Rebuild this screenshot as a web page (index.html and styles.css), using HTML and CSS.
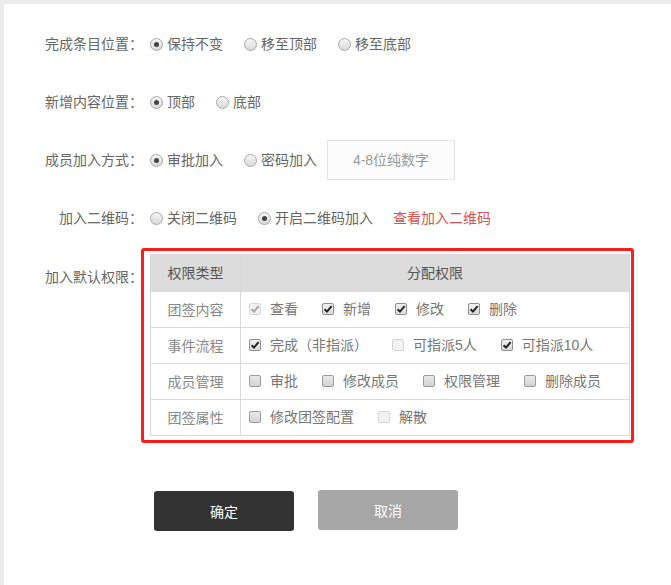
FILE: index.html
```html
<!DOCTYPE html>
<html lang="zh-CN">
<head>
<meta charset="utf-8">
<title>设置</title>
<link rel="stylesheet" href="styles.css">
</head>
<body>
<div class="page">
  <form class="form">
    <div class="row">
      <span class="label">完成条目位置：</span>
      <div class="options">
        <span class="opt"><i class="radio on"></i>保持不变</span>
        <span class="opt"><i class="radio"></i>移至顶部</span>
        <span class="opt"><i class="radio"></i>移至底部</span>
      </div>
    </div>
    <div class="row">
      <span class="label">新增内容位置：</span>
      <div class="options">
        <span class="opt"><i class="radio on"></i>顶部</span>
        <span class="opt"><i class="radio"></i>底部</span>
      </div>
    </div>
    <div class="row">
      <span class="label">成员加入方式：</span>
      <div class="options">
        <span class="opt"><i class="radio on"></i>审批加入</span>
        <span class="opt"><i class="radio"></i>密码加入</span>
        <input class="pwd" type="text" placeholder="4-8位纯数字">
      </div>
    </div>
    <div class="row">
      <span class="label">加入二维码：</span>
      <div class="options">
        <span class="opt"><i class="radio"></i>关闭二维码</span>
        <span class="opt"><i class="radio on"></i>开启二维码加入</span>
        <a class="link" href="#">查看加入二维码</a>
      </div>
    </div>
    <div class="row row-perm">
      <span class="label">加入默认权限：</span>
      <div class="perm">
        <table class="perm-table">
          <thead>
            <tr><th class="c1">权限类型</th><th>分配权限</th></tr>
          </thead>
          <tbody>
            <tr>
              <td class="cat">团签内容</td>
              <td><div class="items">
                <span class="chk"><i class="box dis"><svg viewBox="0 0 10 10"><path d="M1.6 5.2 L4 7.6 L8.6 2.2" /></svg></i>查看</span>
                <span class="chk"><i class="box on"><svg viewBox="0 0 10 10"><path d="M1.6 5.2 L4 7.6 L8.6 2.2" /></svg></i>新增</span>
                <span class="chk"><i class="box on"><svg viewBox="0 0 10 10"><path d="M1.6 5.2 L4 7.6 L8.6 2.2" /></svg></i>修改</span>
                <span class="chk"><i class="box on"><svg viewBox="0 0 10 10"><path d="M1.6 5.2 L4 7.6 L8.6 2.2" /></svg></i>删除</span>
              </div></td>
            </tr>
            <tr>
              <td class="cat">事件流程</td>
              <td><div class="items">
                <span class="chk"><i class="box on"><svg viewBox="0 0 10 10"><path d="M1.6 5.2 L4 7.6 L8.6 2.2" /></svg></i>完成（非指派）</span>
                <span class="chk"><i class="box dis"></i>可指派5人</span>
                <span class="chk"><i class="box on"><svg viewBox="0 0 10 10"><path d="M1.6 5.2 L4 7.6 L8.6 2.2" /></svg></i>可指派10人</span>
              </div></td>
            </tr>
            <tr>
              <td class="cat">成员管理</td>
              <td><div class="items">
                <span class="chk"><i class="box"></i>审批</span>
                <span class="chk"><i class="box"></i>修改成员</span>
                <span class="chk"><i class="box"></i>权限管理</span>
                <span class="chk"><i class="box"></i>删除成员</span>
              </div></td>
            </tr>
            <tr>
              <td class="cat">团签属性</td>
              <td><div class="items">
                <span class="chk"><i class="box"></i>修改团签配置</span>
                <span class="chk"><i class="box dis"></i>解散</span>
              </div></td>
            </tr>
          </tbody>
        </table>
        <div class="highlight"></div>
      </div>
    </div>
    <div class="actions">
      <button class="btn btn-ok" type="button">确定</button>
      <button class="btn btn-cancel" type="button">取消</button>
    </div>
  </form>
</div>
</body>
</html>
```

FILE: styles.css
```css
* { box-sizing: border-box; }

body {
  margin: 0;
  background: #ebebeb;
  font-family: "Liberation Sans", "Noto Sans CJK SC", sans-serif;
  font-size: 14px;
  color: #666;
}

.page {
  margin: 4px 0 0 4px;
  background: #fff;
  height: 581px;
  padding-top: 20px;
}

.form {
  display: flex;
  flex-direction: column;
}

.row {
  display: flex;
  align-items: center;
  height: 40px;
}

.row + .row { margin-top: 18px; }

.label {
  width: 139px;
  margin-right: 7px;
  text-align: right;
  line-height: 20px;
  white-space: nowrap;
  color: #666;
}

.options {
  display: flex;
  align-items: center;
}

.opt {
  display: flex;
  align-items: center;
  line-height: 20px;
  white-space: nowrap;
}

.opt + .opt { margin-left: 21px; }

.radio {
  position: relative;
  display: inline-block;
  width: 13px;
  height: 13px;
  margin-right: 4px;
  border: 1px solid #a8a8a8;
  border-radius: 50%;
  background: linear-gradient(#f6f6f6, #d9d9d9);
}

.radio.on::after {
  content: "";
  position: absolute;
  left: 3px;
  top: 3px;
  width: 5px;
  height: 5px;
  border-radius: 50%;
  background: #444;
}

.pwd {
  width: 128px;
  height: 40px;
  margin-left: 10px;
  border: 1px solid #e3e3e3;
  background: #fcfcfc;
  text-align: center;
  font-family: "Liberation Sans", "Noto Sans CJK SC", sans-serif;
  font-size: 14px;
  color: #666;
  outline: none;
}

.pwd::placeholder { color: #9a9a9a; }

.link {
  margin-left: 20px;
  line-height: 20px;
  color: #d9534f;
  text-decoration: none;
}

.row.row-perm {
  height: auto;
  align-items: flex-start;
  margin-top: 16px;
}

.row-perm .label { padding-top: 13px; }

.perm { position: relative; }

.perm-table {
  width: 480px;
  border-collapse: collapse;
  table-layout: fixed;
}

.perm-table th {
  height: 37px;
  padding: 0;
  background: #dcdcdc;
  font-weight: normal;
  color: #555;
  text-align: center;
  border-left: 1px solid #d6d6d6;
  border-right: 1px solid #d6d6d6;
}

.perm-table th.c1 { width: 90px; }

.perm-table td {
  height: 36px;
  padding: 0 0 0 8px;
  border: 1px solid #dadada;
  color: #777;
  vertical-align: middle;
}

.perm-table td.cat {
  padding: 0;
  text-align: center;
  color: #888;
}

.items {
  display: flex;
  align-items: center;
  height: 34px;
}

.chk {
  display: inline-flex;
  align-items: center;
  line-height: 20px;
  white-space: nowrap;
}

.chk + .chk { margin-left: 24px; }

.box {
  display: inline-flex;
  align-items: center;
  justify-content: center;
  width: 12px;
  height: 12px;
  margin-right: 9px;
  border: 1px solid #9c9c9c;
  border-radius: 2px;
  background: linear-gradient(#e9e9e9, #d3d3d3);
}

.box.on {
  background: linear-gradient(#f0f0f0, #dcdcdc);
  border-color: #8e8e8e;
}

.box.dis {
  border-color: #d6d6d6;
  background: #f1f1f1;
}

.box svg {
  width: 10px;
  height: 10px;
  fill: none;
  stroke: #222;
  stroke-width: 2;
}

.box.dis svg { stroke: #a5a5a5; }

.highlight {
  position: absolute;
  left: -9px;
  top: -6px;
  right: -4px;
  bottom: -7px;
  border: 3px solid #ff1c1c;
  border-radius: 3px;
  pointer-events: none;
}

.actions {
  display: flex;
  align-items: flex-start;
  margin: 55px 0 0 150px;
}

.btn {
  width: 140px;
  height: 40px;
  border: 0;
  border-radius: 3px;
  color: #fff;
  font-family: "Liberation Sans", "Noto Sans CJK SC", sans-serif;
  font-size: 14px;
  cursor: pointer;
}

.btn-ok { background: #333; }

.btn-cancel {
  margin-left: 24px;
  margin-top: -1px;
  background: #a6a6a6;
}
```
